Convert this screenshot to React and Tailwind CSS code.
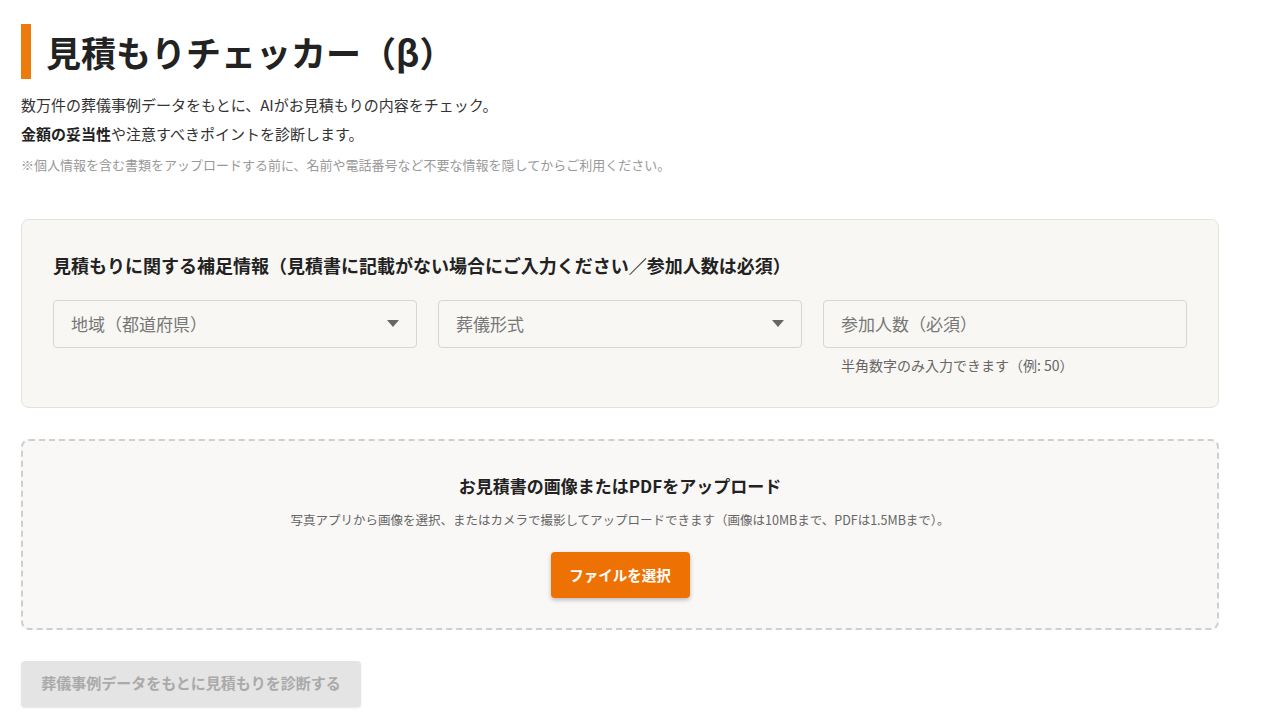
import React, { useState } from "react";

const font = { fontFamily: '"Noto Sans CJK JP", "Noto Sans", sans-serif' };

function Select({ placeholder }) {
  return (
    <div className="relative">
      <div className="h-12 w-full rounded border border-[#d9d6d0] bg-[#f8f7f4] px-[17px] flex items-center text-[17px] text-[#777]">
        {placeholder}
      </div>
      <svg className="absolute right-[18px] top-[20px]" width="12" height="8" viewBox="0 0 12 8">
        <path d="M0 0h12L6 7z" fill="#666" />
      </svg>
    </div>
  );
}

export default function App() {
  const [count, setCount] = useState("");

  return (
    <div style={font} className="min-h-[715px] bg-white px-[21px] pt-[24px] text-[#222]">
      <div className="w-[1198px]">
        {/* Title */}
        <div className="flex items-center gap-[15px]">
          <div className="w-[10px] h-[55px] bg-[#ec7a0c]" />
          <h1 className="text-[35px] font-bold leading-[55px] text-[#222]">見積もりチェッカー（β）</h1>
        </div>

        {/* Description */}
        <div className="mt-[11px] text-[15px] leading-[29px] text-[#333]">
          <p>数万件の葬儀事例データをもとに、AIがお見積もりの内容をチェック。</p>
          <p>
            <span className="font-bold text-[#222]">金額の妥当性</span>や注意すべきポイントを診断します。
          </p>
        </div>
        <p className="mt-[7px] text-[13px] text-[#999]">
          ※個人情報を含む書類をアップロードする前に、名前や電話番号など不要な情報を隠してからご利用ください。
        </p>

        {/* Supplementary info */}
        <div className="mt-[44px] h-[189px] rounded-lg border border-[#e5e2dc] bg-[#f8f7f4] px-[31px] pt-[31px]">
          <h2 className="text-[18px] font-bold leading-[28px] text-[#222]">
            見積もりに関する補足情報（見積書に記載がない場合にご入力ください／参加人数は必須）
          </h2>
          <div className="mt-[21px] grid grid-cols-3 gap-[21px]">
            <Select placeholder="地域（都道府県）" />
            <Select placeholder="葬儀形式" />
            <div>
              <input
                value={count}
                onChange={(e) => setCount(e.target.value)}
                placeholder="参加人数（必須）"
                className="h-12 w-full rounded border border-[#d9d6d0] bg-[#f8f7f4] px-[17px] text-[17px] text-[#333] placeholder-[#777] outline-none"
              />
              <p className="mt-[7px] pl-[18px] text-[14px] text-[#666]">半角数字のみ入力できます（例: 50）</p>
            </div>
          </div>
        </div>

        {/* Upload */}
        <div className="mt-[31px] h-[191px] rounded-lg border-2 border-dashed border-[#cfcfcf] bg-[#f9f8f6] flex flex-col items-center pt-[31px]">
          <h3 className="text-[17px] font-bold leading-[28px] text-[#222]">お見積書の画像またはPDFをアップロード</h3>
          <p className="mt-[10px] text-[12.5px] leading-[20px] text-[#666]">
            写真アプリから画像を選択、またはカメラで撮影してアップロードできます（画像は10MBまで、PDFは1.5MBまで）。
          </p>
          <button className="mt-[22px] h-[46px] w-[139px] rounded bg-[#ee7203] text-[14.5px] font-bold text-white shadow-[0_2px_4px_rgba(0,0,0,0.25)]">
            ファイルを選択
          </button>
        </div>

        {/* Submit */}
        <button
          disabled
          className="mt-[31px] h-[46px] w-[340px] rounded bg-[#e4e4e4] text-[15px] font-bold text-[#aaa] shadow-[0_1px_2px_rgba(0,0,0,0.1)]"
        >
          葬儀事例データをもとに見積もりを診断する
        </button>
      </div>
    </div>
  );
}
